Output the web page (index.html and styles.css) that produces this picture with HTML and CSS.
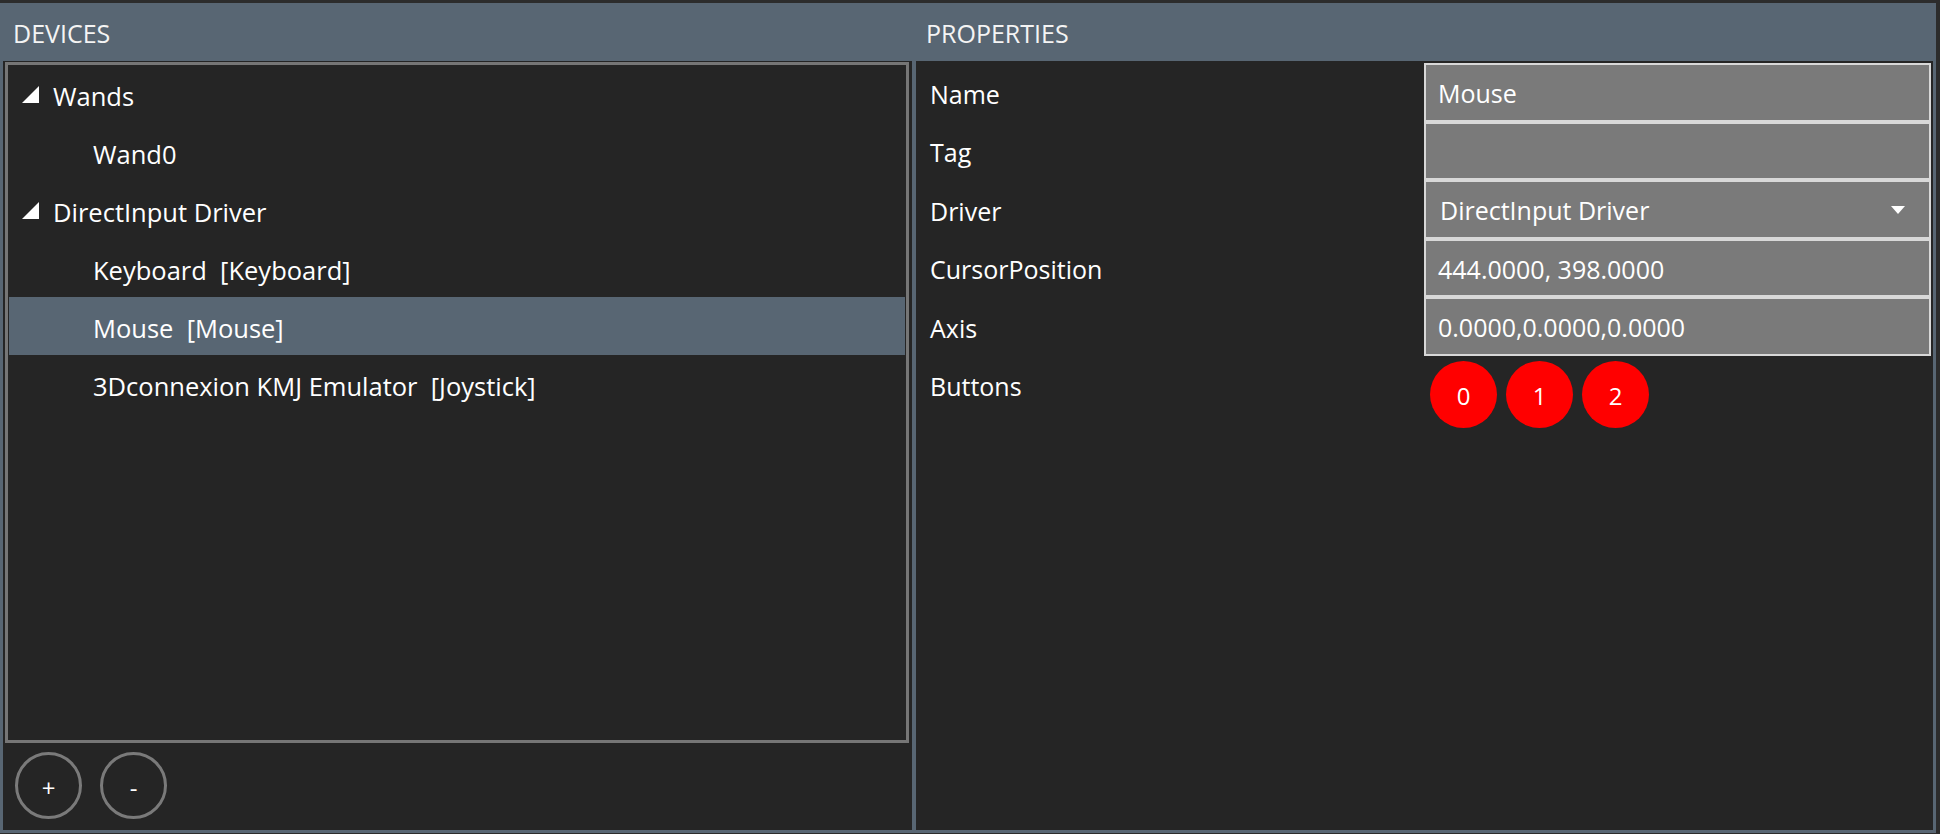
FILE: index.html
```html
<!DOCTYPE html>
<html lang="en">
<head>
    <meta charset="UTF-8">
    <title>Devices</title>
    <link rel="stylesheet" href="styles.css">
</head>
<body>
    <div class="window">
        <header class="titles">
            <div class="title">DEVICES</div>
            <div class="title">PROPERTIES</div>
        </header>

        <div class="panes">
            <section class="devices">
                <ul class="tree">
                    <li class="node">
                        <svg class="expander" width="18" height="18" viewBox="0 0 18 18"><polygon points="0,17 17,17 17,0" fill="#fff"/></svg>
                        <span>Wands</span>
                    </li>
                    <li class="node child"><span>Wand0</span></li>
                    <li class="node">
                        <svg class="expander" width="18" height="18" viewBox="0 0 18 18"><polygon points="0,17 17,17 17,0" fill="#fff"/></svg>
                        <span>DirectInput Driver</span>
                    </li>
                    <li class="node child"><span>Keyboard&nbsp;&nbsp;[Keyboard]</span></li>
                    <li class="node child selected"><span>Mouse&nbsp;&nbsp;[Mouse]</span></li>
                    <li class="node child"><span>3Dconnexion KMJ Emulator&nbsp;&nbsp;[Joystick]</span></li>
                </ul>
                <div class="tools">
                    <button class="round">+</button>
                    <button class="round">-</button>
                </div>
            </section>

            <section class="properties">
                <div class="label">Name</div>
                <div class="field">Mouse</div>

                <div class="label">Tag</div>
                <div class="field"></div>

                <div class="label">Driver</div>
                <div class="field select">
                    <span>DirectInput Driver</span>
                    <svg width="14" height="8" viewBox="0 0 14 8"><polygon points="0,0 14,0 7,8" fill="#fff"/></svg>
                </div>

                <div class="label">CursorPosition</div>
                <div class="field">444.0000, 398.0000</div>

                <div class="label">Axis</div>
                <div class="field">0.0000,0.0000,0.0000</div>

                <div class="label">Buttons</div>
                <div class="buttons">
                    <span class="led">0</span>
                    <span class="led">1</span>
                    <span class="led">2</span>
                </div>
            </section>
        </div>
    </div>
</body>
</html>
```

FILE: styles.css
```css
* {
    box-sizing: border-box;
}

body {
    margin: 0;
    background-color: #2c2c2c;
    font-family: "Open Sans", "Noto Sans", sans-serif;
    font-size: 25px;
    color: #fff;
}

.window {
    margin-top: 3px;
    width: 1936px;
    height: 830px;
    display: grid;
    grid-template-rows: 58px 1fr;
    background-color: #586673;
    padding: 0 3px 3px 3px;
}

.titles {
    display: grid;
    grid-template-columns: 909px 1fr;
    column-gap: 4px;
    align-items: center;
}

.title {
    padding: 2px 0 0 10px;
    font-size: 25px;
    color: #f4f4f4;
}

.panes {
    display: grid;
    grid-template-columns: 909px 1fr;
    column-gap: 4px;
    min-height: 0;
}

/* left side */

.devices {
    background-color: #252525;
    display: flex;
    flex-direction: column;
    padding: 1px 0 0 2px;
}

.tree {
    list-style: none;
    margin: 0;
    padding: 0;
    width: 904px;
    height: 681px;
    border: 3px solid #767676;
}

.node {
    height: 58px;
    display: flex;
    align-items: center;
    padding: 4px 0 0 14px;
    font-size: 25.5px;
}

.node .expander {
    margin-right: 13px;
    margin-top: -2px;
}

.node.child {
    padding-left: 85px;
}

.node.selected {
    background-color: #586673;
    margin: 0 1px;
    padding-left: 84px;
}

.tools {
    display: flex;
    gap: 18px;
    padding: 9px 0 0 10px;
}

.round {
    width: 67px;
    height: 67px;
    border-radius: 50%;
    border: 3px solid #7a7a7a;
    background: transparent;
    color: #fff;
    font-family: "Open Sans", sans-serif;
    font-size: 24px;
    padding: 4px 0 0 0;
    line-height: 1;
}

/* right side */

.properties {
    background-color: #252525;
    display: grid;
    grid-template-columns: 494px 1fr;
    grid-auto-rows: 58.5px;
    align-content: start;
    padding: 2px 2px 0 14px;
}

.label {
    display: flex;
    align-items: center;
    padding-top: 3px;
}

.field {
    background-color: #7a7a7a;
    border: 2px solid #d8d8d8;
    display: flex;
    align-items: center;
    padding: 2px 0 0 12px;
}

.field.select {
    justify-content: space-between;
    padding-right: 24px;
    padding-left: 14px;
}

.buttons {
    display: flex;
    gap: 9px;
    padding: 5px 0 0 6px;
}

.led {
    width: 67px;
    height: 67px;
    border-radius: 50%;
    background-color: #ff0000;
    display: flex;
    align-items: center;
    justify-content: center;
    font-size: 24px;
    padding-top: 3px;
}
```
